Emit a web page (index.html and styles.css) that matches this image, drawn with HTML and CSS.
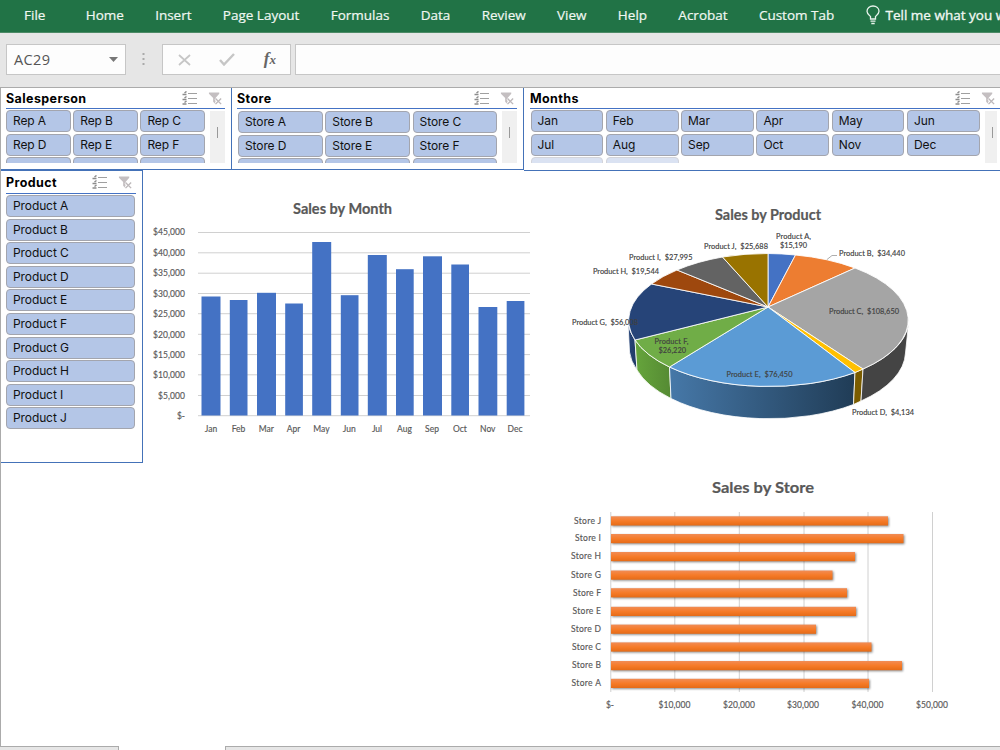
FILE: index.html
```html
<!DOCTYPE html>
<html lang="en">
<head>
    <meta charset="UTF-8">
    <meta name="viewport" content="width=device-width, initial-scale=1.0">
    <title>Sales Dashboard</title>
    <link rel="stylesheet" href="styles.css">
</head>
<body>

    <!-- Shared icons -->
    <svg width="0" height="0" class="defs">
        <symbol id="multi" viewBox="0 0 15 15">
            <path d="M6 2.5h9M6 7.5h9M6 12.5h9" stroke="#a0a0a0" stroke-width="1.200" fill="none"/>
            <path d="M0.500 3.500h4M2.500 2l2-1.500M0.500 8.500h4M2.500 7l2-1.500M0.500 13h4M2.500 11.500l2-1.500" stroke="#8c8c8c" stroke-width="1.500" fill="none"/>
        </symbol>
        <symbol id="clear" viewBox="0 0 16 15">
            <path d="M1 1h11v1.500L8 7v6.500L5.500 11V7L1 2.500z" fill="#c4bfc1"/>
            <path d="M8 7.500l6 6M14 7.500l-6 6" stroke="#fff" stroke-width="3"/>
            <path d="M8 7.500l6 6M14 7.500l-6 6" stroke="#bdb8ba" stroke-width="1.500"/>
        </symbol>
    </svg>

    <!-- Ribbon tabs -->
    <nav class="ribbon">
        <span class="file">File</span>
        <span>Home</span>
        <span>Insert</span>
        <span>Page Layout</span>
        <span>Formulas</span>
        <span>Data</span>
        <span>Review</span>
        <span>View</span>
        <span>Help</span>
        <span>Acrobat</span>
        <span>Custom Tab</span>
        <span class="tell">
            <svg width="14" height="20" viewBox="0 0 14 20" fill="none" stroke="#e8f3ec" stroke-width="1.300">
                <path d="M4.500 14v-2.500C2.500 9.500 1 8.500 1 6.200 1 3.200 3.600 1 7 1s6 2.200 6 5.200c0 2.300-1.500 3.300-3.500 5.300V14zM4.500 16.200h5M5.300 18.500h3.400"/>
            </svg>
            Tell me what you w
        </span>
    </nav>

    <!-- Name box and formula bar -->
    <div class="formula-bar">
        <div class="name-box">AC29
            <svg width="9" height="5" viewBox="0 0 9 5"><path d="M0 0h9L4.500 5z" fill="#777"/></svg>
        </div>
        <svg class="dots" width="3" height="13" viewBox="0 0 3 13" fill="#aaa"><path d="M0.500 0h2v2h-2zM0.500 5h2v2h-2zM0.500 10h2v2h-2z"/></svg>
        <div class="fx-box">
            <svg width="13" height="12" viewBox="0 0 13 12"><path d="M1 1l11 10M12 1L1 11" stroke="#c6c6c6" stroke-width="1.700"/></svg>
            <svg width="16" height="13" viewBox="0 0 16 13"><path d="M1 7l4 4.500L15 1" stroke="#c6c6c6" stroke-width="2.400" fill="none"/></svg>
            <span class="fx">f<small>x</small></span>
        </div>
        <div class="formula"></div>
    </div>

    <div class="sheet">
        <div class="top-slicers">
            <section class="slicer salesperson">
                <header><h3>Salesperson</h3><svg class="ic"><use href="#multi"/></svg><svg class="ic"><use href="#clear"/></svg></header>
                <div class="slicer-body">
                    <div class="items">
                        <span>Rep A</span><span>Rep B</span><span>Rep C</span>
                        <span>Rep D</span><span>Rep E</span><span>Rep F</span>
                        <span></span><span></span><span></span>
                    </div>
                    <div class="scroll"></div>
                </div>
            </section>

            <section class="slicer store">
                <header><h3>Store</h3><svg class="ic"><use href="#multi"/></svg><svg class="ic"><use href="#clear"/></svg></header>
                <div class="slicer-body">
                    <div class="items">
                        <span>Store A</span><span>Store B</span><span>Store C</span>
                        <span>Store D</span><span>Store E</span><span>Store F</span>
                        <span></span><span></span><span></span>
                    </div>
                    <div class="scroll"></div>
                </div>
            </section>

            <section class="slicer months">
                <header><h3>Months</h3><svg class="ic"><use href="#multi"/></svg><svg class="ic"><use href="#clear"/></svg></header>
                <div class="slicer-body">
                    <div class="items">
                        <span>Jan</span><span>Feb</span><span>Mar</span><span>Apr</span><span>May</span><span>Jun</span>
                        <span>Jul</span><span>Aug</span><span>Sep</span><span>Oct</span><span>Nov</span><span>Dec</span>
                        <span class="empty"></span><span class="empty"></span>
                    </div>
                    <div class="scroll"></div>
                </div>
            </section>
        </div>

        <div class="main">
            <section class="slicer product">
                <header><h3>Product</h3><svg class="ic"><use href="#multi"/></svg><svg class="ic"><use href="#clear"/></svg></header>
                <div class="items">
                    <span>Product A</span>
                    <span>Product B</span>
                    <span>Product C</span>
                    <span>Product D</span>
                    <span>Product E</span>
                    <span>Product F</span>
                    <span>Product G</span>
                    <span>Product H</span>
                    <span>Product I</span>
                    <span>Product J</span>
                </div>
            </section>

            <!-- Sales by Month -->
            <svg class="chart" width="408" height="270" viewBox="142 171 408 270">
                <text class="title" x="293" y="214" textLength="99" lengthAdjust="spacingAndGlyphs">Sales by Month</text>
                <path class="grid" d="M198 232.500h332M198 252.800h332M198 273.200h332M198 293.500h332M198 313.700h332M198 334.300h332M198 354.600h332M198 374.800h332M198 395.500h332M198 415.700h332"/>
                <g class="axis">
                    <text x="153" y="235.300" textLength="32">$45,000</text>
                    <text x="153" y="255.600" textLength="32">$40,000</text>
                    <text x="153" y="276.300" textLength="32">$35,000</text>
                    <text x="153" y="296.500" textLength="32">$30,000</text>
                    <text x="153" y="316.800" textLength="32">$25,000</text>
                    <text x="153" y="337.500" textLength="32">$20,000</text>
                    <text x="153" y="357.700" textLength="32">$15,000</text>
                    <text x="153" y="378" textLength="32">$10,000</text>
                    <text x="158" y="398.700" textLength="27">$5,000</text>
                    <text x="177" y="418.700" textLength="8">$-</text>
                </g>
                <g fill="#4472c4">
                    <rect x="201.500" y="296.500" width="19" height="119"/>
                    <rect x="229.800" y="300" width="17.700" height="115.500"/>
                    <rect x="257" y="292.800" width="19" height="122.700"/>
                    <rect x="285.200" y="303.500" width="17.700" height="112"/>
                    <rect x="312.200" y="242" width="19" height="173.500"/>
                    <rect x="340.800" y="295.200" width="17.700" height="120.300"/>
                    <rect x="367.800" y="255" width="19" height="160.500"/>
                    <rect x="396" y="269.200" width="17.700" height="146.300"/>
                    <rect x="423" y="256.300" width="19" height="159.200"/>
                    <rect x="451.300" y="264.500" width="17.700" height="151"/>
                    <rect x="478.500" y="307" width="18.800" height="108.500"/>
                    <rect x="506.700" y="301" width="17.700" height="114.500"/>
                </g>
                <g class="axis mid">
                    <text x="211" y="431.500">Jan</text>
                    <text x="238.500" y="431.500">Feb</text>
                    <text x="266.300" y="431.500">Mar</text>
                    <text x="293.500" y="431.500">Apr</text>
                    <text x="321.500" y="431.500">May</text>
                    <text x="349.300" y="431.500">Jun</text>
                    <text x="377" y="431.500">Jul</text>
                    <text x="404.500" y="431.500">Aug</text>
                    <text x="432" y="431.500">Sep</text>
                    <text x="460" y="431.500">Oct</text>
                    <text x="487.800" y="431.500">Nov</text>
                    <text x="515" y="431.500">Dec</text>
                </g>
            </svg>

            <div class="right-charts">
                <!-- Sales by Product -->
                <svg class="chart" width="400" height="269" viewBox="550 171 400 269">
                    <defs>
                        <linearGradient id="wallE"><stop offset="0" stop-color="#4678a8"/><stop offset="1" stop-color="#203c56"/></linearGradient>
                        <linearGradient id="wallF"><stop offset="0" stop-color="#66a53c"/><stop offset="1" stop-color="#558a33"/></linearGradient>
                        <linearGradient id="wallG"><stop offset="0" stop-color="#264478"/><stop offset="1" stop-color="#1f3864"/></linearGradient>
                    </defs>
                    <text class="title" x="715" y="220" textLength="106" lengthAdjust="spacingAndGlyphs">Sales by Product</text>

                    <!-- side walls -->
                    <g stroke="#fff" stroke-width="0.800">
                        <path fill="url(#wallG)" d="M628 322A140.500 66.500 0 0 0 635 340L637 370A137 67 0 0 1 629.500 352Z"/>
                        <path fill="url(#wallF)" d="M635 340A140.500 66.500 0 0 0 669.500 367L671 398.500A137 67 0 0 1 637 370Z"/>
                        <path fill="url(#wallE)" d="M669.500 367A140.500 66.500 0 0 0 855 372.500L853.500 404.500A137 67 0 0 1 671 398.500Z"/>
                        <path fill="#7a5c00" d="M855 372.500L863 369L861 401L853.500 404.500Z"/>
                        <path fill="#444" d="M863 369A140.500 66.500 0 0 0 908.500 324L905.500 353A137 67 0 0 1 861 401Z"/>
                    </g>

                    <!-- top face -->
                    <g stroke="#fff" stroke-opacity="0.850" stroke-width="1" stroke-linejoin="round">
                        <path fill="#4472c4" d="M768 307L768 253.500A140.500 66.500 0 0 1 795.500 255Z"/>
                        <path fill="#ed7d31" d="M768 307L795.500 255A140.500 66.500 0 0 1 855 268Z"/>
                        <path fill="#a5a5a5" d="M768 307L855 268A140.500 66.500 0 0 1 863 369Z"/>
                        <path fill="#ffc000" d="M768 307L863 369A140.500 66.500 0 0 1 855 372.500Z"/>
                        <path fill="#5b9bd5" d="M768 307L855 372.500A140.500 66.500 0 0 1 669.500 367Z"/>
                        <path fill="#70ad47" d="M768 307L669.500 367A140.500 66.500 0 0 1 635 340Z"/>
                        <path fill="#264478" d="M768 307L635 340A140.500 66.500 0 0 1 651.500 284Z"/>
                        <path fill="#9e480e" d="M768 307L651.500 284A140.500 66.500 0 0 1 677 270Z"/>
                        <path fill="#636363" d="M768 307L677 270A140.500 66.500 0 0 1 722.500 257Z"/>
                        <path fill="#997300" d="M768 307L722.500 257A140.500 66.500 0 0 1 768 253.500Z"/>
                    </g>
                    <path d="M827 259.500l5-4h5" fill="none" stroke="#999" stroke-width="0.800"/>

                    <g class="labels">
                        <text x="776" y="238.500" textLength="35">Product A,</text>
                        <text x="780" y="248" textLength="27">$15,190</text>
                        <text x="839" y="256" textLength="66">Product B,&#160; $34,440</text>
                        <text x="829" y="314" textLength="70">Product C,&#160; $108,650</text>
                        <text x="852" y="415" textLength="62">Product D,&#160; $4,134</text>
                        <text x="726.500" y="376.500" textLength="66">Product E,&#160; $76,450</text>
                        <text x="654.500" y="343.500" textLength="34">Product F,</text>
                        <text x="658.500" y="353" textLength="27.500">$26,220</text>
                        <text x="572" y="324.500" textLength="66">Product G,&#160; $56,008</text>
                        <text x="593" y="274" textLength="66">Product H,&#160; $19,544</text>
                        <text x="629" y="260" textLength="63.500">Product I,&#160; $27,995</text>
                        <text x="704" y="249" textLength="64">Product J,&#160; $25,688</text>
                    </g>
                </svg>

                <!-- Sales by Store -->
                <svg class="chart" width="415" height="280" viewBox="550 440 415 280">
                    <defs>
                        <linearGradient id="bar" x1="0" y1="0" x2="0" y2="1">
                            <stop offset="0" stop-color="#f18c55"/>
                            <stop offset="0.500" stop-color="#f67b28"/>
                            <stop offset="1" stop-color="#e56b17"/>
                        </linearGradient>
                    </defs>
                    <text class="title store-title" x="712" y="493" textLength="102" lengthAdjust="spacingAndGlyphs">Sales by Store</text>
                    <path class="grid" d="M610.800 512v180M674.800 512v180M739.300 512v180M804 512v180M868 512v180M932.500 512v180"/>
                    <g class="bars" fill="url(#bar)">
                        <rect x="611" y="516.300" width="277" height="9.200"/>
                        <rect x="611" y="534" width="292.500" height="9.200"/>
                        <rect x="611" y="552" width="244" height="9.200"/>
                        <rect x="611" y="570.500" width="221.500" height="9.200"/>
                        <rect x="611" y="588.200" width="236" height="9.200"/>
                        <rect x="611" y="606.800" width="245" height="9.200"/>
                        <rect x="611" y="624.600" width="205" height="9.200"/>
                        <rect x="611" y="642.400" width="260.500" height="9.200"/>
                        <rect x="611" y="661" width="291" height="9.200"/>
                        <rect x="611" y="678.800" width="258" height="9.200"/>
                    </g>
                    <g class="axis end">
                        <text x="601" y="523.500" textLength="27">Store J</text>
                        <text x="601" y="541.300" textLength="26">Store I</text>
                        <text x="601" y="559.200" textLength="30">Store H</text>
                        <text x="601" y="578" textLength="30">Store G</text>
                        <text x="601" y="595.500" textLength="28">Store F</text>
                        <text x="601" y="614.200" textLength="28.500">Store E</text>
                        <text x="601" y="632" textLength="30">Store D</text>
                        <text x="601" y="649.700" textLength="29">Store C</text>
                        <text x="601" y="668.300" textLength="29">Store B</text>
                        <text x="601" y="686.200" textLength="29.500">Store A</text>
                    </g>
                    <g class="axis">
                        <text x="606" y="708.300" textLength="8">$-</text>
                        <text x="658.500" y="708.300" textLength="32">$10,000</text>
                        <text x="723" y="708.300" textLength="32">$20,000</text>
                        <text x="787" y="708.300" textLength="32">$30,000</text>
                        <text x="851.500" y="708.300" textLength="32">$40,000</text>
                        <text x="916" y="708.300" textLength="32">$50,000</text>
                    </g>
                </svg>
            </div>
        </div>
    </div>

    <!-- Sheet tabs -->
    <div class="tabs"><div class="tab-left"></div><div class="tab-right"></div></div>

</body>
</html>
```
FILE: styles.css
```css
* {
    box-sizing: border-box;
}

body {
    margin: 0;
    width: 1000px;
    height: 750px;
    overflow: hidden;
    display: flex;
    flex-direction: column;
    background: #fff;
    font-family: "Open Sans", "Noto Sans", sans-serif;
}

.defs {
    position: absolute;
}

/* Ribbon */
.ribbon {
    flex: none;
    height: 33px;
    padding: 0 0 3px 24px;
    display: flex;
    align-items: center;
    gap: 31.3px;
    background: #217346;
    border-bottom: 1px solid #4c8a66;
    color: #f0f7f2;
    font-size: 13.5px;
    -webkit-text-stroke: 0.2px #f0f7f2;
    white-space: nowrap;
    overflow: hidden;
}

.file {
    margin-right: 9px;
}

.tell {
    display: flex;
    align-items: center;
    gap: 6px;
    -webkit-text-stroke: 0.35px #f0f7f2;
}

/* Formula bar */
.formula-bar {
    flex: none;
    height: 55px;
    padding: 11px 0 12px 6px;
    display: flex;
    align-items: center;
    background: #e6e6e6;
    border-bottom: 1px solid #ababab;
}

.name-box,
.fx-box,
.formula {
    height: 31px;
    background: #fdfdfd;
    border: 1px solid #c6c6c6;
    display: flex;
    align-items: center;
}

.name-box {
    width: 120px;
    padding: 0 7px;
    justify-content: space-between;
    font-size: 14.5px;
    letter-spacing: 0.4px;
    color: #555;
}

.dots {
    margin: 0 17px 0 16px;
}

.fx-box {
    width: 129px;
    padding: 0 14px 0 15px;
    justify-content: space-between;
}

.fx {
    font-family: "Liberation Serif", serif;
    font-style: italic;
    font-weight: bold;
    font-size: 17px;
    line-height: 20px;
    color: #666;
}

.fx small {
    font-size: 13px;
}

.formula {
    flex: 1;
    margin-left: 4px;
    border-right: 0;
}

/* Sheet */
.sheet {
    flex: 1;
    border-left: 1px solid #ababab;
    overflow: hidden;
}

.top-slicers {
    display: flex;
    align-items: flex-start;
    height: 82px;
}

.slicer {
    font-family: Inter, sans-serif;
    background: #fff;
    border: 0 solid #4472b8;
    padding: 0 6px 0 5px;
    flex: none;
}

.slicer header {
    display: flex;
    align-items: center;
    height: 21px;
    padding-right: 2px;
    border-bottom: 1px solid #4472c4;
}

.slicer h3 {
    flex: 1;
    margin: 0;
    font-size: 12.5px;
    font-weight: 700;
    letter-spacing: 0.4px;
    color: #000;
}

.ic {
    width: 15px;
    height: 15px;
    margin-left: 11px;
}

.slicer-body {
    display: flex;
    justify-content: space-between;
    height: 54px;
    overflow: hidden;
}

.items {
    display: grid;
    grid-auto-rows: 22px;
    gap: 1.6px 2.5px;
    padding-top: 1px;
}

.items span {
    padding-left: 6px;
    background: #b4c6e7;
    border: 1px solid #a3a5ae;
    border-radius: 4px;
    font-size: 12px;
    line-height: 20px;
    letter-spacing: -0.1px;
    color: #111;
}

.items .empty {
    background: #dae2f2;
    border-color: #d3d4da;
}

.scroll {
    width: 15px;
    margin-top: 2px;
    background: linear-gradient(#999, #999) 7px 16px / 1px 11px no-repeat, #f0f0f0;
}

.salesperson {
    width: 231px;
    height: 82px;
    border-width: 0 1px 1px 0;
}

.salesperson .items {
    grid-template-columns: repeat(3, 64.7px);
}

.store {
    width: 292px;
    height: 82px;
    border-width: 0 1px 1px 0;
}

.store .items {
    grid-template-columns: repeat(3, 84.8px);
    padding-top: 2px;
    padding-left: 1px;
}

.months {
    width: 485px;
    height: 83px;
    border-width: 0 0 1px 0;
    padding-left: 6px;
    padding-right: 12px;
}

.months .items {
    grid-template-columns: repeat(6, 72.8px);
    padding-left: 0.5px;
}

.months header {
    margin-right: -4px;
    padding-right: 5px;
}

.months .scroll {
    margin-right: -3px;
}

.product {
    width: 142px;
    height: 293px;
    border-width: 1px 1px 1px 0;
}

.product header {
    height: 23px;
    padding-right: 3px;
}

.main {
    display: flex;
    align-items: flex-start;
}

.product .items {
    margin-right: 1px;
}

.right-charts {
    display: flex;
    flex-direction: column;
}

/* Charts */
.chart {
    display: block;
    flex: none;
    font-family: Lato, sans-serif;
    margin: 1px 0 0 -1px;
}

.right-charts .chart {
    margin-left: 0;
}

.right-charts .chart + .chart {
    margin-top: 0;
}

.title {
    font-size: 14.5px;
    font-weight: 700;
    fill: #595959;
    stroke: #595959;
    stroke-width: 0.2px;
}

.store-title {
    font-size: 15.5px;
}

.grid {
    stroke: #d0d0d0;
    stroke-width: 1;
    fill: none;
}

.axis text {
    font-size: 8.5px;
    fill: #595959;
    stroke: #595959;
    stroke-width: 0.15px;
}

.mid {
    text-anchor: middle;
}

.end {
    text-anchor: end;
}

.labels text {
    font-size: 7.4px;
    fill: #404040;
    stroke: #404040;
    stroke-width: 0.15px;
}

.bars {
    filter: drop-shadow(1px 1.5px 1px rgba(0, 0, 0, 0.45));
}

/* Sheet tabs */
.tabs {
    flex: none;
    height: 4px;
    display: flex;
    justify-content: space-between;
}

.tab-left,
.tab-right {
    background: #e6e6e6;
    border-top: 1px solid #ababab;
}

.tab-left {
    width: 119px;
    border-right: 1px solid #ababab;
}

.tab-right {
    width: 775px;
    border-left: 1px solid #ababab;
}
```
